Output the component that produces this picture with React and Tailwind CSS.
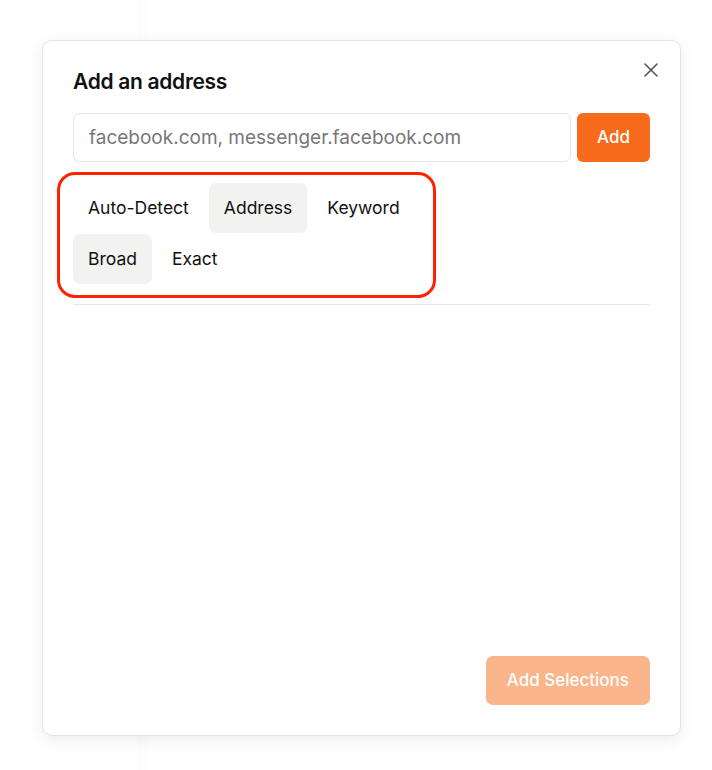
import { useState } from 'react';

const TYPES = ['Auto-Detect', 'Address', 'Keyword'];
const MATCHES = ['Broad', 'Exact'];

function Tab({ label, active, onClick }) {
  return (
    <button
      onClick={onClick}
      className={`h-[50px] px-[15px] rounded-[7px] text-[17.5px] text-[#111] ${active ? 'bg-[#f2f2f1]' : 'bg-transparent'}`}
    >
      {label}
    </button>
  );
}

export default function App() {
  const [type, setType] = useState('Address');
  const [match, setMatch] = useState('Broad');

  return (
    <div className="relative h-[770px] w-full bg-white font-['Inter',sans-serif] overflow-hidden">
      {/* faint backdrop column */}
      <div className="absolute left-[137px] top-0 h-full w-[11px] bg-[#fdfdfd]" />

      <div className="relative ml-[42px] pt-[40px]">
        <div className="relative flex h-[696px] w-[639px] flex-col rounded-[10px] border border-[#e4e4e4] bg-white px-[30px] pb-[30px] pt-[26px] shadow-[0_4px_16px_rgba(0,0,0,0.08)]">
          <button className="absolute right-[22px] top-[22px] text-[#555]">
            <svg width="14" height="14" viewBox="0 0 14 14" fill="none" stroke="currentColor" strokeWidth="1.6" strokeLinecap="round">
              <path d="M1 1l12 12M13 1L1 13" />
            </svg>
          </button>

          <h2 className="text-[21px] font-semibold leading-[30px] tracking-[-0.3px] text-[#111]">Add an address</h2>

          <div className="mt-[16px] flex gap-[6px]">
            <input
              className="h-[49px] flex-1 rounded-[6px] border border-[#e4e4e4] px-[15px] text-[19px] text-[#111] placeholder:text-[#777] outline-none"
              placeholder="facebook.com, messenger.facebook.com"
            />
            <button className="h-[49px] w-[73px] rounded-[6px] bg-[#f86a1c] text-[17px] font-medium text-white">Add</button>
          </div>

          <div className="mt-[21px] flex flex-col gap-px">
            <div className="flex gap-[5px]">
              {TYPES.map((t) => (
                <Tab key={t} label={t} active={type === t} onClick={() => setType(t)} />
              ))}
            </div>
            <div className="flex gap-[5px]">
              {MATCHES.map((m) => (
                <Tab key={m} label={m} active={match === m} onClick={() => setMatch(m)} />
              ))}
            </div>
          </div>

          <div className="mt-[20px] h-px bg-[#e6e6e6]" />

          <div className="mt-auto flex justify-end">
            <button disabled className="h-[49px] rounded-[7px] bg-[#fbb58b] px-[21px] text-[17px] font-medium text-white">
              Add Selections
            </button>
          </div>

          {/* annotation highlight */}
          <div className="pointer-events-none absolute left-[14px] top-[131px] h-[126px] w-[379px] rounded-[18px] border-[3px] border-[#ff2200]" />
        </div>
      </div>
    </div>
  );
}
